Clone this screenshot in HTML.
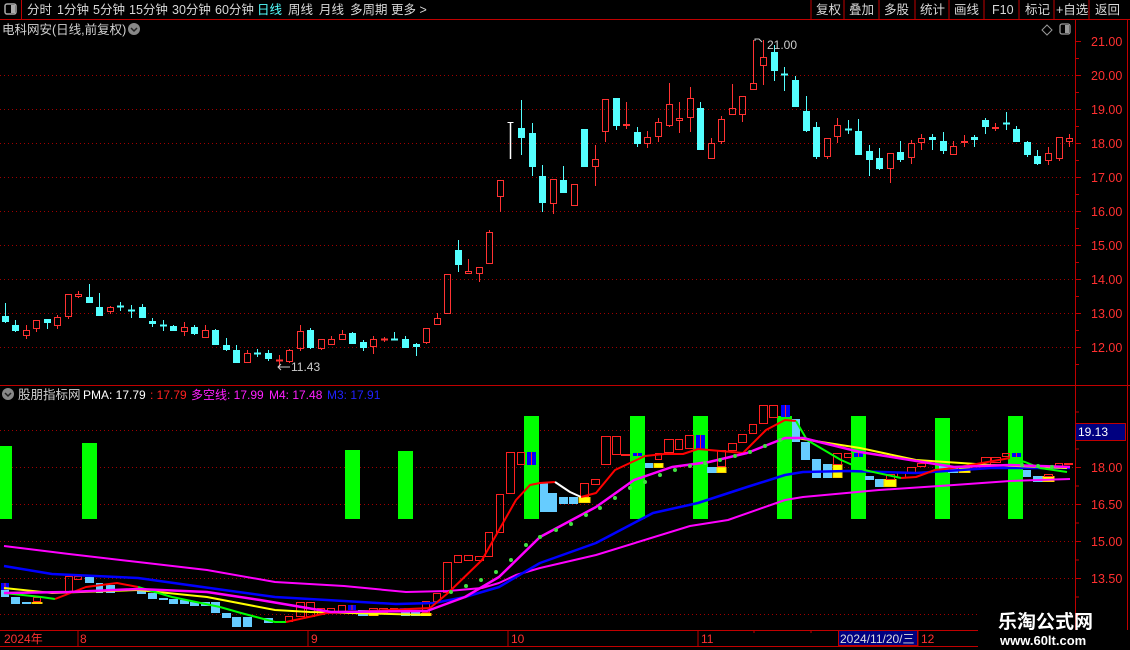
<!DOCTYPE html>
<html><head><meta charset="utf-8"><style>
html,body{margin:0;padding:0;background:#000;width:1130px;height:650px;overflow:hidden}
svg{display:block}
text{font-family:"Liberation Sans","Noto Sans CJK SC",sans-serif}
</style></head><body>
<svg id="s" width="1130" height="650" xmlns="http://www.w3.org/2000/svg">
<rect width="1130" height="650" fill="#000"/>
<line x1="0" y1="19.5" x2="1130" y2="19.5" stroke="#c00000"/>
<line x1="21.5" y1="0" x2="21.5" y2="19" stroke="#c00000"/>
<rect x="5" y="4" width="11" height="10" rx="2" fill="none" stroke="#aaa" stroke-width="1.5"/>
<rect x="11" y="5" width="4" height="8" fill="#aaa"/>
<g font-size="12.5" fill="#d8d8d8">
<text x="27" y="14">分时</text><text x="57" y="14">1分钟</text><text x="93" y="14">5分钟</text>
<text x="129" y="14">15分钟</text><text x="172" y="14">30分钟</text><text x="215" y="14">60分钟</text>
<text x="257" y="14" fill="#54ffff">日线</text><text x="288" y="14">周线</text><text x="319" y="14">月线</text>
<text x="350" y="14">多周期</text><text x="391" y="14">更多 &gt;</text>
<text x="816" y="14">复权</text><text x="849" y="14">叠加</text><text x="884" y="14">多股</text><text x="920" y="14">统计</text>
<text x="954" y="14">画线</text><text x="992" y="14">F10</text><text x="1025" y="14">标记</text><text x="1056" y="14">+自选</text><text x="1095" y="14">返回</text>
</g>
<g stroke="#c00000"><line x1="811" y1="0" x2="811" y2="19"/><line x1="844" y1="0" x2="844" y2="19"/><line x1="879" y1="0" x2="879" y2="19"/><line x1="915" y1="0" x2="915" y2="19"/><line x1="949" y1="0" x2="949" y2="19"/><line x1="984" y1="0" x2="984" y2="19"/><line x1="1019" y1="0" x2="1019" y2="19"/><line x1="1054" y1="0" x2="1054" y2="19"/><line x1="1089" y1="0" x2="1089" y2="19"/></g>
<text x="2" y="34" font-size="12.5" fill="#d0d0d0">电科网安(日线,前复权)</text>
<circle cx="134" cy="29" r="6" fill="#888"/><path d="M131 28l3 3 3-3" stroke="#222" stroke-width="1.5" fill="none"/>
<path d="M1047 25l5 5-5 5-5-5z" fill="none" stroke="#999"/>
<rect x="1060" y="24" width="10" height="10" rx="2" fill="none" stroke="#999" stroke-width="1.3"/><rect x="1065" y="25" width="4" height="8" fill="#999"/>
<line x1="1075.5" y1="20" x2="1075.5" y2="630" stroke="#c00000"/>
<line x1="1127.5" y1="20" x2="1127.5" y2="630" stroke="#c00000"/>
<line x1="0" y1="385.5" x2="1130" y2="385.5" stroke="#c00000"/>
<g id="g"></g>
<circle cx="8" cy="394" r="6" fill="#888"/><path d="M5 393l3 3 3-3" stroke="#222" stroke-width="1.5" fill="none"/>
<text x="18" y="399" font-size="12.5" fill="#d0d0d0">股朋指标网</text>
<text x="83" y="399" font-size="12" fill="#fff">PMA: 17.79</text>
<text x="150" y="399" font-size="12" fill="#ff2020">: 17.79</text>
<text x="191" y="399" font-size="12" fill="#ff20ff">多空线: 17.99</text>
<text x="269" y="399" font-size="12" fill="#ff20ff">M4: 17.48</text>
<text x="327" y="399" font-size="12" fill="#2020ff">M3: 17.91</text>
<line x1="0" y1="630.5" x2="978" y2="630.5" stroke="#c00000"/>
<line x1="0" y1="646.5" x2="978" y2="646.5" stroke="#c00000"/>
<g stroke="#c00000"><line x1="78" y1="630" x2="78" y2="646"/><line x1="308" y1="630" x2="308" y2="646"/><line x1="508" y1="630" x2="508" y2="646"/><line x1="698" y1="630" x2="698" y2="646"/><line x1="918" y1="630" x2="918" y2="646"/><line x1="754" y1="630" x2="754" y2="633"/><line x1="811" y1="630" x2="811" y2="633"/></g>
<g font-size="12" fill="#ff3030"><text x="4" y="643">2024年</text><text x="80" y="643">8</text><text x="311" y="643">9</text><text x="511" y="643">10</text><text x="701" y="643">11</text><text x="921" y="643">12</text></g>
<rect x="838.5" y="630.5" width="79" height="15" fill="#000080" stroke="#c00000"/>
<text x="840" y="643" font-size="12" fill="#ddd">2024/11/20/三</text>
<rect x="1075.5" y="423.5" width="50" height="17" fill="#000080" stroke="#c00000"/>
<text x="1078" y="436" font-size="12" fill="#fff">19.13</text>
<text x="998" y="628" font-size="19" font-weight="bold" fill="#fff">乐淘公式网</text>
<text x="1000" y="645" font-size="13" font-weight="bold" fill="#fff" font-family="Liberation Serif,serif">www.60lt.com</text>
<text x="767" y="49" font-size="12" fill="#ccc">21.00</text>
<path d="M755 41v-2h4l3 3" stroke="#ccc" fill="none"/>
<text x="291" y="371" font-size="12" fill="#ccc">11.43</text>
<path d="M290 367h-12m3-3l-3 3 3 3" stroke="#ccc" fill="none"/>
</svg>
<script>
var g=document.getElementById('g'),h='';
function L(x1,y1,x2,y2,c,w,d){h+='<line x1="'+x1+'" y1="'+y1+'" x2="'+x2+'" y2="'+y2+'" stroke="'+c+'" stroke-width="'+(w||1)+'"'+(d?' stroke-dasharray="'+d+'"':'')+'/>';}
function R(x,y,w,hh,f,s){h+='<rect x="'+x+'" y="'+y+'" width="'+w+'" height="'+hh+'" fill="'+(f||'none')+'"'+(s?' stroke="'+s+'"':'')+'/>';}
function T(x,y,t,c){h+='<text x="'+x+'" y="'+y+'" font-size="12.5" fill="'+c+'">'+t+'</text>';}
var lab=['21.00','20.00','19.00','18.00','17.00','16.00','15.00','14.00','13.00','12.00'];
for(var i=0;i<10;i++){var y=41+i*34;if(i>0)L(0,y+.5,1075,y+.5,'#a00000',1,'1 3');L(1075,y+.5,1081,y+.5,'#c00000');L(1075,y+17.5,1079,y+17.5,'#c00000');T(1091,y+5,lab[i],'#ff3030');}
var il=[[430,''],[467,'18.00'],[504,'16.50'],[541,'15.00'],[578,'13.50'],[614,'']];
il.forEach(function(a){L(0,a[0]+.5,a[1]?1075:978,a[0]+.5,'#a00000',1,'1 3');if(a[1]){L(1075,a[0]+.5,1081,a[0]+.5,'#c00000');T(1091,a[0]+5,a[1],'#ff3030');}});
for(var y=412;y<630;y+=18.5)L(1075,y,1079,y,'#c00000');
var C=[['c',316,322,303,323],['c',325,331,320,332],['r',330,336,325,339],['r',320,329,320,332],['c',319,323,319,329],['r',317,326,315,329],['r',294,317,294,319],['r',294,297,291,298],['c',297,303,284,303],['c',307,316,293,316],['r',307,312,306,314],['c',306,307,302,311],['c',310,311,305,318],['c',307,318,304,318],['c',321,324,318,327],['c',325,326,320,331],['c',326,331,325,331],['r',327,332,322,336],['c',327,334,325,335],['r',330,338,325,338],['c',330,345,329,345],['c',345,350,338,351],['c',350,363,345,363],['r',353,363,350,363],['c',353,354,349,357],['c',353,359,350,361],['r',360,361,355,367],['r',350,362,349,363],['r',331,349,325,351],['c',330,348,328,349],['r',339,349,339,350],['r',339,345,336,345],['r',334,340,330,340],['c',333,344,332,344],['c',342,348,340,351],['r',339,347,336,354],['r',339,340,337,342],['c',339,340,332,340],['c',339,348,336,348],['c',344,347,343,356],['r',328,343,328,344],['r',318,325,313,325],['r',274,314,274,314],['c',250,265,240,272],['r',271,274,259,274],['r',267,274,267,282],['r',232,264,230,264],
['r',180,197,180,212],['w',122,159,122,159],['c',128,138,100,155],['c',133,167,123,176],['c',176,203,165,212],['r',179,204,179,214],['c',180,193,166,193],['r',184,206,184,206],['c',129,167,129,167],['r',159,167,145,186],['r',99,132,99,142],['c',98,126,98,130],['r',124,126,102,129],['c',132,144,127,147],['r',137,144,131,148],['r',122,137,118,142],['r',104,126,83,127],['r',118,121,102,133],['r',98,118,87,132],['c',108,150,102,150],['r',143,159,138,159],['r',119,142,116,144],['r',108,115,84,115],['r',96,115,96,122],['r',83,90,40,90],['r',57,66,40,85],['c',52,71,45,81],['c',74,75,67,91],['c',80,107,76,107],['c',111,131,96,132],['c',127,157,122,159],['r',138,157,138,159],['r',125,137,118,143],['c',129,130,120,134],['c',131,155,119,155],['c',151,160,145,176],['c',158,169,148,170],['r',153,169,153,183],['c',152,160,141,162],['r',143,158,140,164],['r',138,143,134,150],['c',137,140,134,150],['c',141,151,132,154],['r',146,155,141,155],['r',141,143,135,147],['c',137,140,135,147],['c',120,127,118,134],['r',127,129,123,131],['c',123,124,112,130],['c',129,142,126,142],['c',142,155,141,157],['c',156,164,150,165],['r',153,161,147,165],['r',137,159,137,161],['r',138,142,134,147]];
C.forEach(function(c,i){var x=Math.round(4.5+i*10.54)+.5;var col=c[0]=='r'?'#ff3232':c[0]=='c'?'#54ffff':'#fff';
if(c[0]=='w'){L(x,c[1],x,c[2],col,1.5);L(x-3,c[1]+.5,x+3,c[1]+.5,col);return;}
L(x,c[3],x,c[1],col);L(x,c[2],x,c[4],col);
if(c[2]-c[1]<=1){L(x-3.5,c[1]+.5,x+3.5,c[1]+.5,col,2);return;}
if(c[0]=='r')R(x-3,c[1]+.5,6,c[2]-c[1]-1,'none',col);else R(x-3.5,c[1],7,c[2]-c[1],col);});
[[0,12,446],[82,97,443],[345,360,450],[398,413,451],[524,539,416],[630,645,416],[693,708,416],[777,792,416],[851,866,416],[935,950,418],[1008,1023,416]].forEach(function(b){R(b[0],b[2],b[1]-b[0],519-b[2],'#00ff00');});
var B=[['b',1,9,583,590],['l',1,9,590,597],['l',11,20,597,604],['l',22,31,602,604],['y',31,43,602,604],['r',33,41,597,602],['r',65,73,576,593],['r',74,82,576,580],['l',85,94,577,583],['l',96,103,583,593],['l',106,115,585,593],['l',137,146,588,594],['l',148,157,593,599],['l',159,168,598,600],['l',169,178,599,604],['l',180,189,600,604],['l',190,199,602,606],['l',201,210,602,606],['l',211,220,602,613],['l',222,231,613,618],['l',232,241,617,627],['l',243,252,617,627],['l',264,273,618,623],['r',285,293,616,622],['r',296,305,602,617],['r',306,315,602,617],['r',317,325,608,615],['r',327,335,608,613],['r',338,346,605,612],['b',348,356,605,610],['l',358,368,610,616],['y',368,379,610,616],['r',369,378,608,613],['r',379,388,608,613],['r',390,398,608,612],['b',400,410,608,612],['l',401,410,612,616],['l',411,420,612,616],['y',420,432,613,616],['r',422,430,601,613],['r',433,441,593,602],['r',443,452,562,593],['r',454,462,555,563],['r',464,473,555,561],['r',475,484,556,561],['r',485,493,532,557],['r',496,504,494,533],['r',506,515,452,494],['r',517,525,452,465],['b',527,536,452,465],
['l',540,548,483,512],['l',548,557,493,512],['l',559,568,497,504],['l',569,578,497,504],['y',578,591,497,503],['r',580,589,483,497],['r',591,600,479,485],['r',601,611,436,465],['r',612,621,436,455],['r',621,630,454,456],['b',633,642,453,456],['l',645,653,463,468],['y',653,664,463,468],['r',655,662,453,460],['r',664,674,439,453],['r',675,683,439,450],['r',685,694,435,449],['b',696,705,435,449],['l',707,717,467,473],['y',716,727,467,473],['r',717,726,450,467],['r',728,737,443,451],['r',738,747,434,443],['r',749,757,424,434],['r',759,768,405,424],['r',769,778,405,418],['b',781,790,405,417],['l',792,800,419,442],['l',801,810,442,460],['l',812,821,459,478],['l',823,832,464,478],['y',832,843,464,478],['r',833,842,453,465],['r',844,852,453,458],['b',854,863,453,457],['l',865,874,476,480],['l',875,884,479,487],['y',883,897,479,487],['r',886,895,474,480],['r',897,906,472,478],['r',907,916,467,473],['r',917,926,463,467],['l',939,948,465,472],['l',948,958,467,473],['y',958,971,467,473],['r',971,980,465,470],['r',981,991,457,467],['r',991,1001,457,463],['r',1002,1010,453,457],['b',1012,1021,453,457],['l',1023,1031,470,477],['l',1033,1044,476,482],['y',1042,1055,476,482],['r',1044,1053,474,477],['r',1055,1063,463,468],['r',1064,1073,463,465]];
B.forEach(function(b){var w=b[2]-b[1],hh=b[4]-b[3];
if(b[0]=='r')R(b[1]+.5,b[3]+.5,w-1,hh-1,'none','#ff2020');
else if(b[0]=='l')R(b[1],b[3],w,hh,'#66ccff');
else if(b[0]=='y')R(b[1]+1,b[3]+.5,w-2,hh-1,'#ffff00','#ffcc00');
else{R(b[1],b[3],w,hh,'#0000ff');L((b[1]+b[2])/2,b[3],(b[1]+b[2])/2,b[4],'#ff2020');}});
function P(pts,c,w){h+='<polyline points="'+pts+'" fill="none" stroke="'+c+'" stroke-width="'+(w||2)+'" stroke-linejoin="round"/>';}
P('4,546 69,554 138,562 207,570 275,582 344,586 406,592 448,591 482,588 499,583 516,575 540,568 596,555 690,526 728,520 785,500 803,497 879,490 954,485 1010,481 1070,479','#ff00ff',2);
P('4,566 52,574 138,578 224,590 275,597 344,601 396,604 434,603 465,597 499,587 540,563 596,543 653,513 698,503 747,487 785,475 803,472 848,471 916,473 991,468 1029,468 1070,468','#0000ff',2.5);
P('4,588 52,593 138,590 207,597 275,610 310,612 430,615','#ffff00',2);
P('796,438 860,448 916,460 991,465 1067,468','#ffff00',2);
P('4,593 41,597 55,599','#00ff00',2);
P('55,599 86,587 117,583 138,587','#ff0000',2);
P('138,587 172,597 220,607 241,613 275,622 286,622','#00ff00',2);
P('286,622 327,613 430,608 448,593 482,560 516,500 530,485 540,483 555,482','#ff0000',2);
P('555,482 570,492 581,497','#fff',2);
P('581,497 596,493 615,470 645,456 664,454 683,454 698,449 743,453 766,430 785,420 796,421','#ff0000',2);
P('796,421 807,440 841,460 864,470 901,478','#00ff00',2);
P('901,478 916,477 935,470 954,468 1010,458','#ff0000',2);
P('1010,458 1025,462 1040,468 1067,472','#00ff00',2);
P('4,593 69,592 138,589 207,592 260,600 331,612 427,611 465,597 499,577 540,537 596,507 634,480 672,467 709,462 747,453 785,438 803,438 860,452 954,467 1010,465 1070,467','#ff00ff',2.5);
var dots=[[451,592],[466,586],[481,580],[496,572],[511,560],[526,545],[540,537],[556,530],[571,524],[586,515],[600,508],[615,498],[630,488],[645,482],[660,475],[675,470],[690,466],[705,463],[720,460],[735,456],[750,452],[765,446],[780,440],[1022,465],[1038,466],[1052,467]];
dots.forEach(function(d){h+='<circle cx="'+d[0]+'" cy="'+d[1]+'" r="2" fill="#40e040"/>';});
g.innerHTML=h;
</script>
</body></html>
